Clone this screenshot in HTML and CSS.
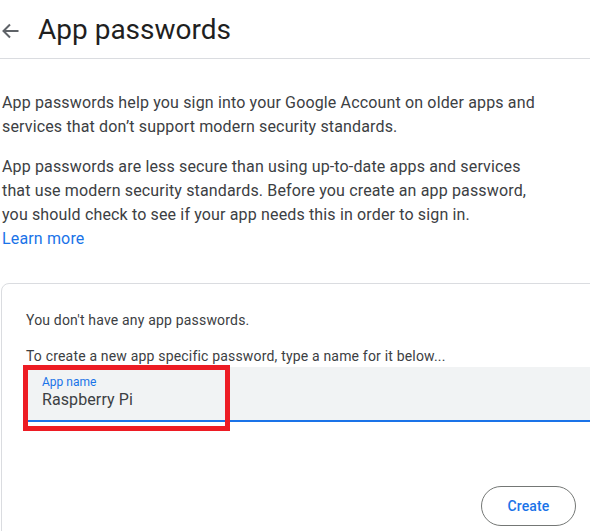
FILE: index.html
```html
<!DOCTYPE html>
<html lang="en">
<head>
<meta charset="utf-8">
<title>App passwords</title>
<link rel="stylesheet" href="styles.css">
</head>
<body>
<div class="page">
  <header class="header">
    <span class="back" aria-label="Back">
      <svg width="18" height="16" viewBox="0 0 18 16" aria-hidden="true">
        <path d="M17.5 8H3M9 1.5L2.5 8L9 14.5" fill="none" stroke="#5f6368" stroke-width="2" stroke-linecap="butt" stroke-linejoin="miter"/>
      </svg>
    </span>
    <h1 class="title">App passwords</h1>
  </header>
  <main class="content">
    <p class="intro first">App passwords help you sign into your Google Account on older apps and<br>services that don’t support modern security standards.</p>
    <p class="intro">App passwords are less secure than using up-to-date apps and services<br>that use modern security standards. Before you create an app password,<br>you should check to see if your app needs this in order to sign in.<br><a class="link" href="#">Learn more</a></p>
    <section class="card">
      <p class="card-text">You don't have any app passwords.</p>
      <p class="card-text second">To create a new app specific password, type a name for it below...</p>
      <div class="field">
        <span class="field-label">App name</span>
        <span class="field-value">Raspberry Pi</span>
        <span class="highlight" aria-hidden="true"></span>
      </div>
      <div class="actions">
        <button class="btn" type="button">Create</button>
      </div>
    </section>
  </main>
</div>
</body>
</html>
```
FILE: styles.css
```css
html, body {
  margin: 0;
  padding: 0;
  background: #ffffff;
  overflow: hidden;
}

body {
  font-family: Roboto, "Liberation Sans", Arial, sans-serif;
  color: #3c4043;
}

.page {
  width: 590px;
  height: 531px;
  overflow: hidden;
}

.header {
  display: flex;
  align-items: center;
  width: 590px;
  padding: 12px 0 10px 0;
  border-bottom: 1px solid #dadce0;
}

.back {
  display: flex;
  width: 18px;
  height: 16px;
  margin-left: 1px;
  margin-top: 1px;
}

.title {
  margin: 0 0 0 19px;
  font-size: 28px;
  line-height: 36px;
  font-weight: 400;
  color: #1f1f1f;
}

.content {
  padding: 0 0 0 1px;
}

.intro {
  margin: 16px 0 0 1px;
  font-size: 16px;
  line-height: 24px;
  letter-spacing: 0.15px;
  color: #3c4043;
}

.intro.first {
  margin-top: 32px;
}

.link {
  color: #1a73e8;
  text-decoration: none;
}

.card {
  margin-top: 32px;
  width: 640px;
  height: 260px;
  border: 1px solid #dadce0;
  border-radius: 8px;
  padding: 26px 24px 0 24px;
  box-sizing: border-box;
}

.card-text {
  margin: 0;
  font-size: 14px;
  line-height: 20px;
  letter-spacing: 0.18px;
  color: #3c4043;
}

.card-text.second {
  margin-top: 16px;
}

.field {
  position: relative;
  margin-top: 1px;
  display: flex;
  flex-direction: column;
  padding: 7px 16px 10px 16px;
  background: #f1f3f4;
  border-bottom: 2px solid #1a73e8;
  border-radius: 4px 4px 0 0;
}

.field-label {
  font-size: 12px;
  line-height: 16px;
  color: #1a73e8;
}

.field-value {
  font-size: 16px;
  line-height: 20px;
  letter-spacing: 0.1px;
  color: #3c4043;
}

.highlight {
  position: absolute;
  left: -3px;
  top: -2px;
  width: 207px;
  height: 66px;
  border: 5px solid #ed1c24;
  box-sizing: border-box;
}

.actions {
  display: flex;
  justify-content: flex-end;
  margin-top: 64px;
  margin-right: 40px;
}

.btn {
  height: 40px;
  width: 95px;
  border: 1px solid #747775;
  border-radius: 20px;
  background: #ffffff;
  font-family: Roboto, "Liberation Sans", Arial, sans-serif;
  font-size: 14px;
  font-weight: 500;
  letter-spacing: 0.1px;
  color: #1a73e8;
  padding: 0;
}
```
